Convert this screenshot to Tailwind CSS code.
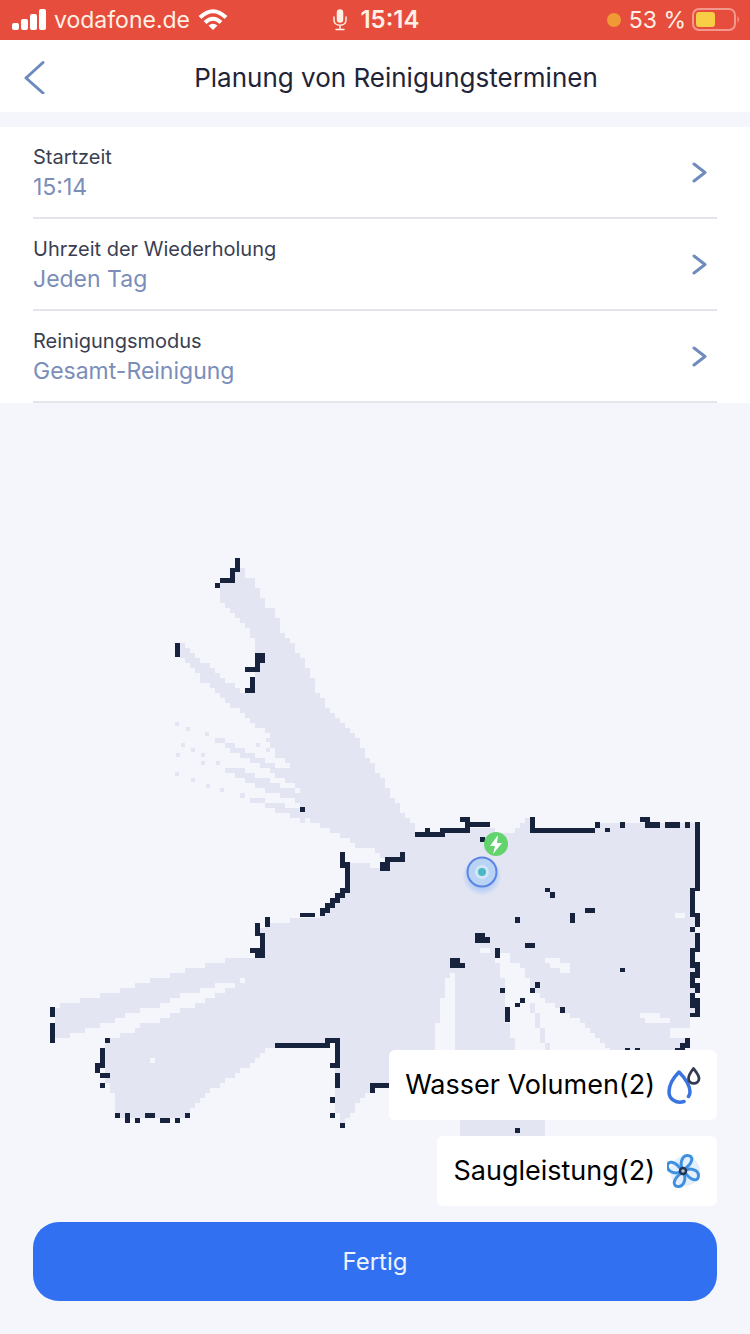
<!DOCTYPE html>
<html lang="de">
<head>
<meta charset="utf-8">
<meta name="viewport" content="width=device-width, initial-scale=1">
<title>Planung von Reinigungsterminen</title>
<script src="https://cdn.jsdelivr.net/npm/@tailwindcss/browser@4"></script>
</head>
<body class="min-h-screen flex flex-col bg-[#f5f6fb] font-['Inter','Liberation_Sans',sans-serif] text-[#1f2438]">

<div class="h-10 grid grid-cols-3 items-center bg-[#e74d3c] text-[#fff0e6] text-[23px] leading-10 pl-3 pr-2.5">
  <div class="flex items-center gap-2">
    <svg class="w-[34px] h-[22px]" viewBox="0 0 34 22" fill="#fff"><rect x="0" y="14" width="7" height="7" rx="2"/><rect x="9" y="10" width="7" height="11" rx="2"/><rect x="18" y="5" width="7" height="16" rx="2"/><rect x="27" y="0" width="7" height="21" rx="2"/></svg>
    <span>vodafone.de</span>
    <svg class="w-[30px] h-[22px]" viewBox="0 0 30 22" fill="none" stroke="#fff" stroke-width="4"><path d="M2 8.500Q15 -4 28 8.500"/><path d="M7 13.500Q15 6 23 13.500"/><path d="M15 21l-4.500-4.500Q15 13 19.500 16.500z" fill="#fff" stroke="none"/></svg>
  </div>
  <div class="flex items-center justify-center gap-3 text-2xl leading-10 font-semibold">
    <svg class="w-4 h-[22px]" viewBox="0 0 16 22" fill="none" stroke="#fff0e6" stroke-width="1.500" stroke-linecap="round"><rect x="5.500" y="1" width="5" height="12" rx="2.500" fill="#fff0e6"/><path d="M2 8v3c0 7 12 7 12 0V8M8 16.500V20M4 20.500h8"/></svg>
    <span>15:14</span>
  </div>
  <div class="flex items-center justify-end gap-[6px]">
    <span class="size-[14px] rounded-full bg-[#f09a37] mr-[2px]"></span>
    <span>53 %</span>
    <svg class="w-12 h-6" viewBox="0 0 48 24"><rect x="1" y="1" width="42" height="21" rx="6" fill="none" stroke="#f3988c" stroke-width="2"/><rect x="4" y="4" width="19" height="15" rx="3" fill="#f7ce46"/><path d="M45.500 8q3 3.500 0 7z" fill="#f3988c"/></svg>
  </div>
</div>

<header class="h-[72px] grid grid-cols-[80px_1fr_38px] items-center bg-white">
  <button type="button" aria-label="Zurück" class="h-full pl-[22px]">
    <svg class="w-6 h-9" viewBox="0 0 24 36" fill="none" stroke="#6c8abf" stroke-width="3" stroke-linecap="round" stroke-linejoin="round"><path d="M21 4.500L4 20 21 35"/></svg>
  </button>
  <h1 class="text-center text-[26px] leading-8 pt-1">Planung von Reinigungsterminen</h1>
</header>

<main class="flex-1 flex flex-col pt-[15px]">
  <section class="bg-white px-[33px]">
    <button type="button" class="w-full h-[92px] flex items-center justify-between border-b-2 border-[#e4e4ea] text-left pr-2.5">
      <span class="flex flex-col"><span class="text-[20px] leading-[30px] text-[#3a3f52]">Startzeit</span><span class="text-[23px] leading-[30px] text-[#7b8db9]">15:14</span></span>
      <svg class="w-4 h-6" viewBox="0 0 16 24" fill="none" stroke="#6f8cbd" stroke-width="3" stroke-linecap="round" stroke-linejoin="round"><path d="M3 4l11 8.500L3 21"/></svg>
    </button>
    <button type="button" class="w-full h-[92px] flex items-center justify-between border-b-2 border-[#e4e4ea] text-left pr-2.5">
      <span class="flex flex-col"><span class="text-[20px] leading-[30px] text-[#3a3f52]">Uhrzeit der Wiederholung</span><span class="text-[23px] leading-[30px] text-[#7b8db9]">Jeden Tag</span></span>
      <svg class="w-4 h-6" viewBox="0 0 16 24" fill="none" stroke="#6f8cbd" stroke-width="3" stroke-linecap="round" stroke-linejoin="round"><path d="M3 4l11 8.500L3 21"/></svg>
    </button>
    <button type="button" class="w-full h-[92px] flex items-center justify-between border-b-2 border-[#e4e4ea] text-left pr-2.5">
      <span class="flex flex-col"><span class="text-[20px] leading-[30px] text-[#3a3f52]">Reinigungsmodus</span><span class="text-[23px] leading-[30px] text-[#7b8db9]">Gesamt-Reinigung</span></span>
      <svg class="w-4 h-6" viewBox="0 0 16 24" fill="none" stroke="#6f8cbd" stroke-width="3" stroke-linecap="round" stroke-linejoin="round"><path d="M3 4l11 8.500L3 21"/></svg>
    </button>
  </section>

  <section class="relative" aria-label="Karte">
    <svg class="block w-full" viewBox="0 403 750 819">
      <defs><radialGradient id="glow"><stop offset=".6" stop-color="#9dc0f5" stop-opacity=".7"/><stop offset="1" stop-color="#9dc0f5" stop-opacity="0"/></radialGradient></defs>
      <g shape-rendering="crispEdges">
        <path id="floor" fill="#e3e6f2"/>
        <path id="walls" fill="#17233d"/>
      </g>
      <circle cx="482" cy="876" r="20" fill="url(#glow)"/>
      <circle cx="482" cy="872" r="14.500" fill="#b9d3f5" stroke="#5b84e6" stroke-width="2"/>
      <circle cx="482" cy="872" r="7" fill="#d3e6f8"/>
      <circle cx="482" cy="872" r="4" fill="#4db8c4"/>
      <circle cx="496" cy="844" r="12" fill="#62d36f"/>
      <path d="M498 835l-8 11h5l-2 8 9-11h-5z" fill="#fff"/>
    </svg>
    <div class="absolute right-[33px] bottom-4 flex flex-col items-end gap-4">
      <button type="button" class="h-[70px] flex items-center gap-3 rounded-md bg-white pl-4 pr-4 text-[27px] text-black">
        <span>Wasser Volumen(2)</span>
        <svg class="w-[34px] h-[38px]" viewBox="0 0 34 38" fill="none" stroke-linecap="round" stroke-linejoin="round"><path d="M17 35.500C9 38 2 33 2 26C2 19 7 11 12 6C17 11 23 18 23 26Q23 28 21.500 30.500" stroke="#3a74e0" stroke-width="3.500"/><path d="M26.500 2.500C23 7 21.500 9 21.500 12.500C21.500 19 32 19 32 12.500C32 9 29 6 26.500 2.500z" stroke="#343a52" stroke-width="2.800"/></svg>
      </button>
      <button type="button" class="h-[70px] flex items-center gap-3 rounded-md bg-white pl-4 pr-4 text-[27px] text-black">
        <span>Saugleistung(2)</span>
        <svg class="w-[34px] h-[36px]" viewBox="0 0 34 36" fill="none"><circle cx="18" cy="18" r="15" fill="#e3effc"/><g stroke="#4090e2" stroke-width="3" stroke-linejoin="round"><path d="M16 17C12 11 15 3 20 2.500C27 2 27 10 16 17z"/><path d="M16 17C12 11 15 3 20 2.500C27 2 27 10 16 17z" transform="rotate(90 16 18)"/><path d="M16 17C12 11 15 3 20 2.500C27 2 27 10 16 17z" transform="rotate(180 16 18)"/><path d="M16 17C12 11 15 3 20 2.500C27 2 27 10 16 17z" transform="rotate(270 16 18)"/></g><circle cx="16" cy="18" r="3" fill="#a9c9ee" stroke="#26344f" stroke-width="2.500"/></svg>
      </button>
    </div>
  </section>

  <footer class="px-[33px] pb-[33px]">
    <button type="button" class="w-full h-[79px] rounded-[26px] bg-[#3171f1] text-[#eef4ff] text-[24px]">Fertig</button>
  </footer>
</main>

<script>
// Scanned floor outlines; they are rasterised to 5-unit map cells.
const areas = [
  [240,558,245,574,254,580,260,595,267,608,275,610,280,628,290,640,300,655,310,675,318,692,326,704,335,715,345,725,360,742,370,762,385,782,396,802,415,828,416,834,460,832,465,822,468,828,490,830,512,833,528,818,532,830,597,830,600,823,697,823,697,890,693,920,697,1015,690,1012,685,1042,680,1052,610,1052,600,1040,590,1033,580,1020,565,1012,545,1000,532,988,528,980,522,965,512,961,496,955,500,975,505,985,505,1020,510,1025,515,1052,530,1090,545,1110,545,1138,460,1138,460,1120,453,1050,456,1040,456,975,449,973,445,985,440,1010,433,1052,433,1080,375,1086,360,1100,350,1118,340,1125,335,1100,335,1045,275,1046,260,1055,245,1068,230,1078,215,1088,205,1098,190,1108,190,1116,115,1116,113,1095,108,1085,105,1070,103,1045,110,1038,135,1033,140,1023,165,1020,175,1012,200,1003,225,990,246,980,220,982,205,990,180,995,165,1005,145,1008,120,1018,100,1025,75,1033,55,1040,55,1007,80,1000,100,995,120,990,150,980,170,975,195,968,215,962,240,958,258,955,262,930,268,922,300,920,320,915,330,905,347,892,347,862,365,862,375,868,385,868,383,856,375,850,355,845,345,838,330,830,318,823,285,812,300,808,298,790,293,768,278,757,272,745,265,730,250,722,240,712,228,702,220,695,210,685,200,680,195,670,185,662,180,655,180,643,190,648,200,660,215,668,225,680,235,685,245,695,256,678,256,645,250,630,240,620,232,612,222,600,218,588,222,580,234,578],
  [213,740,222,740,300,778,300,788],
  [226,770,242,770,300,793,300,802,262,790],
  [236,794,250,796,306,812,306,822],
  [250,758,262,762,300,772,300,780],
  [529,1005,534,1005,550,1052,545,1052]
];
const dots = [[177,724],[188,729],[207,734],[183,745],[193,750],[178,755],[203,755],[203,763],[218,763],[177,774],[193,780],[208,786],[222,790],[258,745],[268,740],[268,750]];
const holes = [[150,1058,5,4],[480,948,10,4],[675,913,10,4],[545,958,15,5],[550,963,20,5],[560,968,10,4],[640,1013,20,4],[645,1017,25,5],[670,1028,18,9],[500,955,10,8]];
const inside = (x, y, p) => {
  let hit = false;
  for (let i = 0, j = p.length - 2; i < p.length; j = i, i += 2)
    if ((p[i+1] > y) !== (p[j+1] > y) && x < (p[j] - p[i]) * (y - p[i+1]) / (p[j+1] - p[i+1]) + p[i]) hit = !hit;
  return hit;
};
const box = (x, y, w, h) => `M${x} ${y}h${w}v${h}h${-w}z`;
let floor = '';
for (let y = 558; y < 1138; y += 5)
  for (let x = 50; x < 700; x += 5) {
    const cx = x + 2.5, cy = y + 2.5;
    if (holes.some(h => cx > h[0] && cx < h[0] + h[2] && cy > h[1] && cy < h[1] + h[3])) continue;
    if (areas.some(a => inside(cx, cy, a))) floor += box(x, y, 5, 5);
  }
dots.forEach(d => floor += box(d[0] - 2, d[1] - 2, 4, 4));
document.getElementById('floor').setAttribute('d', floor);

const walls = [
  [235,558,5,14],[230,568,5,14],[220,578,15,5],[215,583,5,5],[175,643,5,14],[255,653,10,10],[255,660,5,10],[245,667,15,5],[250,677,5,16],[245,688,10,5],
  [300,807,5,5],[340,852,5,16],[345,862,5,30],[340,888,10,5],[335,893,10,5],[330,898,10,5],[325,903,10,5],[320,908,10,5],[320,912,5,4],[400,852,5,10],[385,857,20,5],[380,862,10,9],
  [300,913,15,4],[265,917,5,10],[255,923,5,13],[260,933,5,24],[250,948,15,5],[255,952,10,6],
  [275,1043,55,5],[325,1038,15,5],[335,1038,5,30],[330,1063,10,5],[335,1073,5,15],[330,1097,5,6],[330,1113,5,5],[340,1123,5,5],[370,1083,20,5],[370,1083,5,10],
  [415,832,30,5],[425,828,5,5],[440,828,30,5],[465,817,5,15],[460,817,10,5],[465,822,25,5],[480,837,5,5],[530,817,5,15],[530,828,65,5],[595,822,5,6],[605,828,5,4],[620,822,5,6],[640,817,10,5],[645,822,15,6],[665,822,15,6],[685,822,5,6],
  [695,822,5,69],[690,888,5,29],[695,913,5,14],[690,927,5,5],[695,933,5,19],[690,948,5,20],[695,962,5,16],[690,972,5,16],[695,983,5,10],[690,993,5,15],[695,998,5,19],[690,1013,10,4],
  [545,888,5,4],[550,892,5,6],[570,913,5,10],[585,908,10,5],[515,917,5,6],[475,933,10,10],[480,937,10,6],[525,943,10,5],[495,948,5,10],[450,958,10,10],[455,963,10,5],
  [500,988,5,5],[535,982,5,6],[530,988,5,5],[520,998,5,5],[515,1003,5,4],[505,1007,5,15],[560,1007,5,6],[620,968,5,4],
  [625,1048,5,4],[635,1048,5,4],[685,1038,5,10],[680,1043,5,5],[675,1048,10,4],[515,1128,5,5],
  [50,1007,5,10],[50,1023,5,20],[105,1038,5,5],[100,1048,5,20],[95,1063,5,10],[100,1073,10,5],[100,1083,5,5],
  [115,1113,5,5],[125,1113,5,10],[135,1118,5,5],[145,1113,10,5],[160,1118,10,5],[175,1118,5,5],[185,1113,5,5]
];
document.getElementById('walls').setAttribute('d', walls.map(w => box(...w)).join(''));
</script>
</body>
</html>
